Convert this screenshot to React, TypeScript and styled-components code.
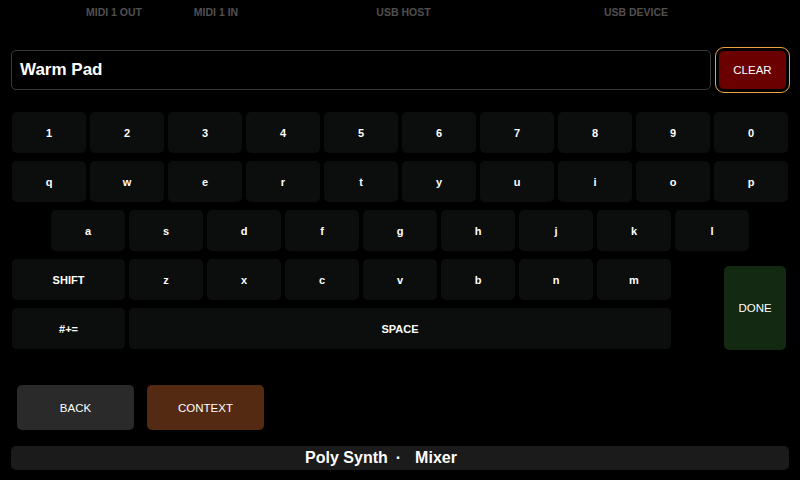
import styled, { createGlobalStyle } from "styled-components";
import { useState } from "react";

const GlobalStyle = createGlobalStyle`
  html, body {
    margin: 0;
    padding: 0;
    background: #000;
  }
  body {
    font-family: "Liberation Sans", Arial, sans-serif;
    color: #fff;
  }
`;

const Screen = styled.div`
  width: 800px;
  height: 480px;
  background: #000;
  display: flex;
  flex-direction: column;
  overflow: hidden;
`;

const StatusBar = styled.div`
  display: flex;
  height: 24px;
  padding-left: 63px;
`;

const StatusLabel = styled.div<{ $w: number }>`
  width: ${({ $w }) => $w}px;
  display: flex;
  align-items: center;
  justify-content: center;
  font-size: 10.5px;
  font-weight: 700;
  color: #505050;
`;

const InputRow = styled.div`
  display: flex;
  align-items: center;
  gap: 8px;
  margin-top: 26px;
  padding: 0 14px 0 11px;
`;

const NameField = styled.div`
  flex: 1;
  height: 40px;
  box-sizing: border-box;
  border: 1px solid #3a3a3a;
  border-radius: 5px;
  display: flex;
  align-items: center;
  padding-left: 8px;
  font-size: 17px;
  font-weight: 700;
`;

const ClearButton = styled.button`
  width: 67px;
  height: 38px;
  border: none;
  border-radius: 5px;
  background: #6a0000;
  color: #fff;
  font-family: inherit;
  font-size: 11.5px;
  outline: 1px solid #f2a23a;
  outline-offset: 3px;
  cursor: pointer;
`;

const Keyboard = styled.div`
  display: flex;
  flex-direction: column;
  gap: 8px;
  margin-top: 22px;
  padding-left: 12px;
`;

const KeyRow = styled.div<{ $indent?: number }>`
  display: flex;
  gap: 4px;
  padding-left: ${({ $indent }) => $indent ?? 0}px;
`;

const Key = styled.button<{ $w?: number }>`
  width: ${({ $w }) => $w ?? 74}px;
  height: 41px;
  border: none;
  border-radius: 5px;
  background: #0b0e0c;
  color: #fff;
  font-family: inherit;
  font-size: 11px;
  font-weight: 700;
  padding: 0;
  cursor: pointer;
`;

const LowerBlock = styled.div`
  display: flex;
  align-items: flex-start;
`;

const LowerRows = styled.div`
  display: flex;
  flex-direction: column;
  gap: 8px;
`;

const DoneButton = styled.button`
  width: 62px;
  height: 84px;
  margin: 7px 0 -1px 53px;
  border: none;
  border-radius: 5px;
  background: #132911;
  color: #fff;
  font-family: inherit;
  font-size: 11.5px;
  cursor: pointer;
`;

const ActionRow = styled.div`
  display: flex;
  gap: 13px;
  margin-top: 36px;
  padding-left: 17px;
`;

const ActionButton = styled.button<{ $bg: string }>`
  width: 117px;
  height: 45px;
  border: none;
  border-radius: 5px;
  background: ${({ $bg }) => $bg};
  color: #fff;
  font-family: inherit;
  font-size: 11.5px;
  cursor: pointer;
`;

const Footer = styled.div`
  margin: 16px 11px 0 11px;
  height: 24px;
  border-radius: 5px;
  background: #1b1b1b;
  display: flex;
  align-items: center;
  justify-content: center;
  padding-right: 38px;
  font-size: 16px;
  font-weight: 700;
`;

const Sep = styled.span`
  margin: 0 14px 0 8px;
`;

const digits = ["1", "2", "3", "4", "5", "6", "7", "8", "9", "0"];
const top = ["q", "w", "e", "r", "t", "y", "u", "i", "o", "p"];
const mid = ["a", "s", "d", "f", "g", "h", "j", "k", "l"];
const bottom = ["z", "x", "c", "v", "b", "n", "m"];

export default function App() {
  const [name, setName] = useState("Warm Pad");
  const type = (ch: string) => setName((n) => n + ch);

  return (
    <Screen>
      <GlobalStyle />
      <StatusBar>
        <StatusLabel $w={102}>MIDI 1 OUT</StatusLabel>
        <StatusLabel $w={102}>MIDI 1 IN</StatusLabel>
        <StatusLabel $w={273}>USB HOST</StatusLabel>
        <StatusLabel $w={192}>USB DEVICE</StatusLabel>
      </StatusBar>

      <InputRow>
        <NameField>{name}</NameField>
        <ClearButton onClick={() => setName("")}>CLEAR</ClearButton>
      </InputRow>

      <Keyboard>
        <KeyRow>
          {digits.map((k) => (
            <Key key={k} onClick={() => type(k)}>{k}</Key>
          ))}
        </KeyRow>
        <KeyRow>
          {top.map((k) => (
            <Key key={k} onClick={() => type(k)}>{k}</Key>
          ))}
        </KeyRow>
        <KeyRow $indent={39}>
          {mid.map((k) => (
            <Key key={k} onClick={() => type(k)}>{k}</Key>
          ))}
        </KeyRow>
        <LowerBlock>
          <LowerRows>
            <KeyRow>
              <Key $w={113}>SHIFT</Key>
              {bottom.map((k) => (
                <Key key={k} onClick={() => type(k)}>{k}</Key>
              ))}
            </KeyRow>
            <KeyRow>
              <Key $w={113}>#+=</Key>
              <Key $w={542} onClick={() => type(" ")}>SPACE</Key>
            </KeyRow>
          </LowerRows>
          <DoneButton>DONE</DoneButton>
        </LowerBlock>
      </Keyboard>

      <ActionRow>
        <ActionButton $bg="#2a2a2a">BACK</ActionButton>
        <ActionButton $bg="#542a12">CONTEXT</ActionButton>
      </ActionRow>

      <Footer>
        <span>Poly Synth</span>
        <Sep>·</Sep>
        <span>Mixer</span>
      </Footer>
    </Screen>
  );
}
